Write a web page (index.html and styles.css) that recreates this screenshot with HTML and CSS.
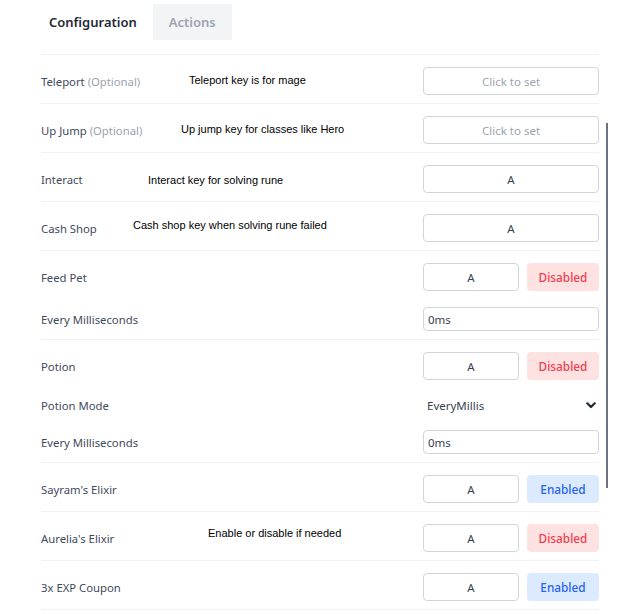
FILE: index.html
```html
<!DOCTYPE html>
<html>
<head>
<meta charset="utf-8">
<link rel="stylesheet" href="styles.css">
</head>
<body>
<div class="page">
  <div class="tabs">
    <div class="tab active">Configuration</div>
    <div class="tab inactive">Actions</div>
  </div>
  <div class="list">
    <div class="group">
      <div class="row">
        <span class="label">Teleport <span class="opt">(Optional)</span></span>
        <div class="key wide placeholder">Click to set</div>
        <span class="note note-teleport">Teleport key is for mage</span>
      </div>
    </div>
    <div class="group">
      <div class="row">
        <span class="label">Up Jump <span class="opt">(Optional)</span></span>
        <div class="key wide placeholder">Click to set</div>
        <span class="note note-upjump">Up jump key for classes like Hero</span>
      </div>
    </div>
    <div class="group">
      <div class="row">
        <span class="label">Interact</span>
        <div class="key wide">A</div>
        <span class="note note-interact">Interact key for solving rune</span>
      </div>
    </div>
    <div class="group">
      <div class="row">
        <span class="label">Cash Shop</span>
        <div class="key wide">A</div>
        <span class="note note-cash">Cash shop key when solving rune failed</span>
      </div>
    </div>
    <div class="group">
      <div class="row">
        <span class="label">Feed Pet</span>
        <div class="controls"><div class="key">A</div><div class="toggle off">Disabled</div></div>
      </div>
      <div class="row">
        <span class="label">Every Milliseconds</span>
        <div class="num">0ms</div>
      </div>
    </div>
    <div class="group">
      <div class="row">
        <span class="label">Potion</span>
        <div class="controls"><div class="key">A</div><div class="toggle off">Disabled</div></div>
      </div>
      <div class="row">
        <span class="label">Potion Mode</span>
        <div class="select"><span>EveryMillis</span>
          <svg width="10" height="7" viewBox="0 0 10 7"><path d="M1.3 1.3 L5 5 L8.7 1.3" fill="none" stroke="#1f2937" stroke-width="2.2" stroke-linecap="round" stroke-linejoin="round"/></svg>
        </div>
      </div>
      <div class="row">
        <span class="label">Every Milliseconds</span>
        <div class="num">0ms</div>
      </div>
    </div>
    <div class="group">
      <div class="row">
        <span class="label">Sayram's Elixir</span>
        <div class="controls"><div class="key">A</div><div class="toggle on">Enabled</div></div>
      </div>
    </div>
    <div class="group">
      <div class="row">
        <span class="label">Aurelia's Elixir</span>
        <div class="controls"><div class="key">A</div><div class="toggle off">Disabled</div></div>
        <span class="note note-elixir">Enable or disable if needed</span>
      </div>
    </div>
    <div class="group">
      <div class="row">
        <span class="label">3x EXP Coupon</span>
        <div class="controls"><div class="key">A</div><div class="toggle on">Enabled</div></div>
      </div>
    </div>
  </div>
  <div class="scroll-thumb"></div>
</div>
</body>
</html>
```

FILE: styles.css
```css
html, body {
  margin: 0;
  padding: 0;
  background: #ffffff;
}
body {
  font-family: "Noto Sans", "Open Sans", sans-serif;
  width: 622px;
  height: 615px;
  overflow: hidden;
}
.page {
  position: relative;
  height: 615px;
}
.tabs {
  display: flex;
  padding: 4px 0 0 33px;
  height: 36px;
}
.tab {
  display: flex;
  align-items: center;
  padding: 0 16px;
  font-size: 13px;
  font-weight: 600;
}
.tab.active {
  color: #1f2937;
}
.tab.inactive {
  color: #9ca3af;
  background: #f3f4f6;
}
.list {
  margin: 14px 23px 0 41px;
  border-top: 1px solid #f0f1f3;
}
.group {
  display: flex;
  flex-direction: column;
  gap: 16px;
  padding: 12px 0 8px;
  border-bottom: 1px solid #f0f1f3;
}
.row {
  position: relative;
  display: flex;
  align-items: center;
  justify-content: space-between;
}
.label {
  font-size: 11.3px;
  color: #3f4a5c;
  padding-top: 1px;
}
.opt {
  color: #9ca3af;
}
.key {
  box-sizing: border-box;
  height: 28px;
  width: 96px;
  border: 1px solid #d1d5db;
  border-radius: 4px;
  display: flex;
  align-items: center;
  justify-content: center;
  font-size: 11.5px;
  color: #374151;
}
.key.wide {
  width: 176px;
}
.key.placeholder {
  color: #9ca3af;
}
.controls {
  display: flex;
  gap: 8px;
}
.toggle {
  box-sizing: border-box;
  width: 72px;
  height: 28px;
  border-radius: 4px;
  display: flex;
  align-items: center;
  justify-content: center;
  font-size: 11.8px;
  font-weight: 500;
}
.toggle.off {
  background: #fee2e2;
  color: #f03e4e;
}
.toggle.on {
  background: #dbeafe;
  color: #2563eb;
}
.num {
  box-sizing: border-box;
  width: 176px;
  height: 24px;
  border: 1px solid #d1d5db;
  border-radius: 4px;
  padding: 0 4px;
  display: flex;
  align-items: center;
  font-size: 11.5px;
  color: #374151;
}
.select {
  box-sizing: border-box;
  width: 176px;
  height: 18px;
  padding: 0 3px 0 4px;
  display: flex;
  align-items: center;
  justify-content: space-between;
  font-size: 11.5px;
  color: #374151;
}
.note {
  position: absolute;
  font-family: "Liberation Sans", Arial, sans-serif;
  font-size: 11px;
  color: #000000;
  white-space: nowrap;
}
.note-teleport { left: 148px; top: 7px; }
.note-upjump { left: 140px; top: 7px; }
.note-interact { left: 107px; top: 9px; }
.note-cash { left: 92px; top: 5px; }
.note-elixir { left: 167px; top: 3px; }
.scroll-thumb {
  position: absolute;
  left: 606px;
  top: 123px;
  width: 2px;
  height: 365px;
  background: #6b7280;
}
```
